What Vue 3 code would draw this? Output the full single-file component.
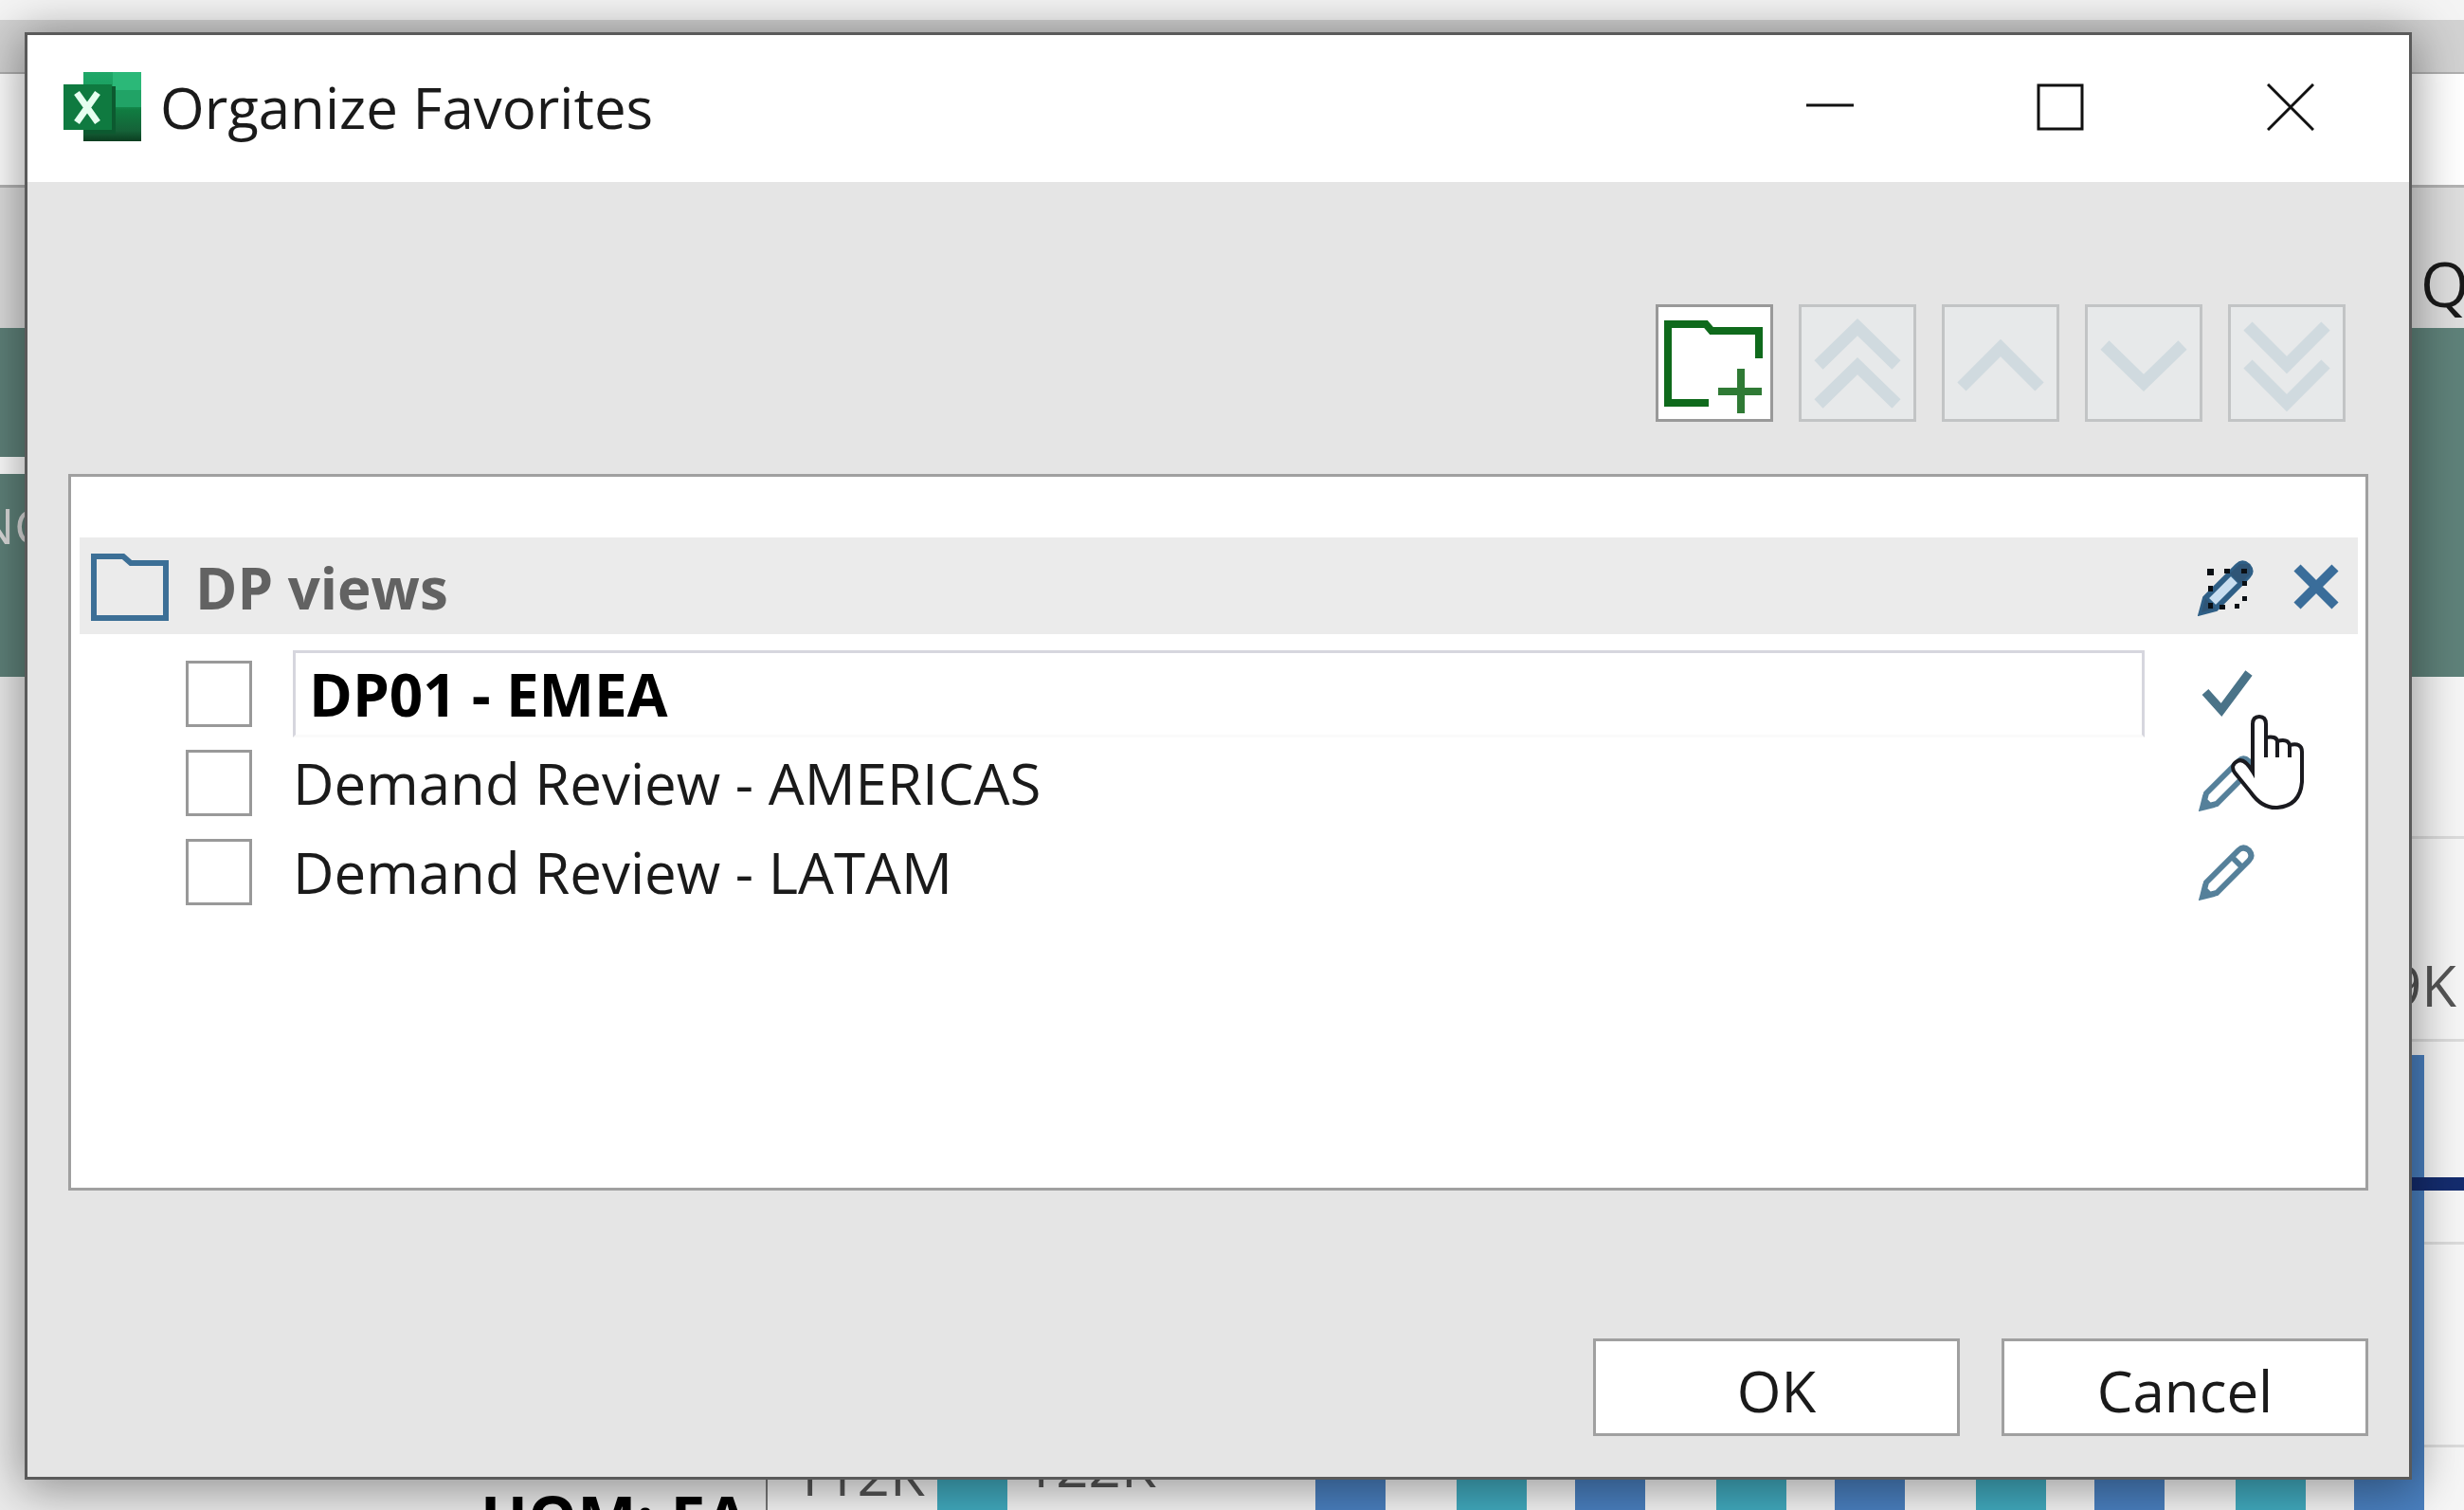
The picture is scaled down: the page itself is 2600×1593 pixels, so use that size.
<template>
  <div class="desktop">
    <div class="sheet" aria-hidden="true">
      <div class="strip ribbon"></div>
      <div class="strip tabs"></div>
      <div class="strip formula"></div>
      <div class="strip heading"><span class="quarter">Q</span></div>
      <div class="band band-top"></div>
      <div class="band band-bottom"><span class="band-text">NG</span></div>
      <div class="report">
        <div class="side"><span class="uom">UOM: EA</span></div>
        <div class="chart">
          <div class="groups">
            <div v-for="(g, i) in groups" :key="i" class="group">
              <div class="bar teal" :style="{ height: `${g[0]}px` }"></div>
              <div class="bar blue" :style="{ height: `${g[1]}px` }"></div>
            </div>
          </div>
          <div class="target"></div>
          <span class="value value-a">112K</span>
          <span class="value value-b">122K</span>
          <span class="value value-c">109K</span>
        </div>
      </div>
    </div>

    <section class="dialog" role="dialog" aria-labelledby="dialog-title">
      <header class="titlebar">
        <svg class="app-icon" viewBox="0 0 82 73">
          <defs>
            <linearGradient id="page" x1="0" y1="0" x2="0" y2="1">
              <stop offset="0" stop-color="#1fa768" />
              <stop offset="0.45" stop-color="#189a5a" />
              <stop offset="0.55" stop-color="#107c41" />
              <stop offset="0.85" stop-color="#156238" />
              <stop offset="1" stop-color="#0b3d20" />
            </linearGradient>
          </defs>
          <rect x="21" y="0" width="61" height="73" fill="url(#page)" />
          <rect x="52" y="0" width="30" height="19" fill="#2bb878" />
          <rect x="52" y="19" width="30" height="18" fill="#21a366" />
          <rect x="21" y="15" width="34" height="50" fill="#0c5a30" />
          <rect x="0" y="13" width="51" height="48" fill="#0f7a40" />
          <path d="M14 22L36 53M36 22L14 53" stroke="#e6fff0" stroke-width="7" fill="none" />
        </svg>
        <h1 id="dialog-title">Organize Favorites</h1>
        <div class="window-buttons">
          <button type="button" aria-label="Minimize">
            <svg viewBox="0 0 50 50"><path d="M0 23H50" /></svg>
          </button>
          <button type="button" aria-label="Maximize">
            <svg viewBox="0 0 50 50"><path d="M2 2H48V48H2Z" /></svg>
          </button>
          <button type="button" aria-label="Close">
            <svg viewBox="0 0 50 50"><path d="M1 1L49 49M49 1L1 49" /></svg>
          </button>
        </div>
      </header>

      <div class="toolbar">
        <button type="button" class="tool add" aria-label="New folder">
          <svg viewBox="0 0 118 118">
            <path d="M53 101H10V18H50L56 25H106V54" stroke="#0f6a1c" stroke-width="8" />
            <path d="M87 65V112M63 89H109" stroke="#2f7a35" stroke-width="8" />
          </svg>
        </button>
        <button v-for="m in moves" :key="m.name" type="button" class="tool" disabled :aria-label="m.name">
          <svg viewBox="0 0 118 118"><path :d="m.path" stroke="#d0dadf" stroke-width="13" /></svg>
        </button>
      </div>

      <div class="list">
        <div class="folder">
          <svg class="folder-icon" viewBox="0 0 84 74">
            <path d="M4 4H35L43 11H80V69H4Z" fill="none" stroke="#3c6f96" stroke-width="6" />
          </svg>
          <h2>DP views</h2>
          <button type="button" class="action" aria-label="Rename folder">
            <svg viewBox="0 0 60 60">
              <path d="M4 56L8 41L42 7Q47 2 53 7Q58 13 53 18L19 52ZM35 14L46 25M8 41L19 52" fill="#c9def0" stroke="#2f5f86" stroke-width="6" />
              <path d="M4 56L8 41L19 52ZM34 15L44 5H55V16L45 26Z" fill="#2f5577" />
              <path d="M10 10h7v7h-7zM28 10h6v5h-6zM11 28h5v6h-5zM11 46h5v6h-5zM23 48h6v5h-6zM39 47h5v5h-5zM47 23h5v5h-5zM47 39h5v5h-5zM46 10h6v5h-6z" fill="#0a0f14" />
            </svg>
          </button>
          <button type="button" class="action" aria-label="Delete folder">
            <svg viewBox="0 0 60 60"><path d="M10 9L50 49M50 9L10 49" stroke="#3a6d9a" stroke-width="10" fill="none" /></svg>
          </button>
        </div>

        <ul>
          <li v-for="item in items" :key="item.id" class="item">
            <input :id="item.id" v-model="item.checked" type="checkbox" :aria-label="item.label" />
            <input v-if="item.editing" v-model="item.label" class="name-box" type="text" aria-label="Favorite name" />
            <label v-else :for="item.id">{{ item.label }}</label>
            <button type="button" class="action" :aria-label="item.editing ? 'Apply' : 'Rename'">
              <svg v-if="item.editing" viewBox="0 0 60 60">
                <path d="M7 28L24 47L53 8" fill="none" stroke="#4a7388" stroke-width="9" />
              </svg>
              <svg v-else viewBox="0 0 60 60">
                <path d="M4 56L8 41L42 7Q47 2 53 7Q58 13 53 18L19 52ZM35 14L46 25M4 56L12 54L6 48Z" fill="none" stroke="#55809a" stroke-width="6" />
              </svg>
            </button>
            <svg v-if="item.editing" class="pointer" viewBox="0 0 78 102">
              <path
                d="M24 61V11Q24 3 31 3Q38 3 38 11V25Q49 23 50 29Q61 26 63 33Q76 30 76 40V72Q74 97 50 99Q34 100 22 83L5 62Q0 54 8 50Q15 46 24 61Z"
                fill="#fff"
              />
              <path d="M38 24V46M50 28V46M63 32V46" fill="none" />
            </svg>
          </li>
        </ul>
      </div>

      <footer class="footer">
        <button type="button">OK</button>
        <button type="button">Cancel</button>
      </footer>
    </section>
  </div>
</template>

<script setup>
import { ref } from 'vue';

const items = ref([
  { id: 'fav-1', label: 'DP01 - EMEA', checked: false, editing: true },
  { id: 'fav-2', label: 'Demand Review - AMERICAS', checked: false, editing: false },
  { id: 'fav-3', label: 'Demand Review - LATAM', checked: false, editing: false }
]);

const moves = [
  { name: 'Move to top', path: 'M18 61L59 21L100 61M18 102L59 62L100 102' },
  { name: 'Move up', path: 'M18 84L59 43L100 84' },
  { name: 'Move down', path: 'M18 40L59 80L100 40' },
  { name: 'Move to bottom', path: 'M18 20L59 61L100 20M18 60L59 101L100 60' }
];

// bar heights per period: [teal, blue]
const groups = [
  [60, 0],
  [0, 60],
  [60, 60],
  [60, 60],
  [60, 60],
  [60, 482]
];
</script>

<style>
body {
  margin: 0;
}
</style>

<style scoped>
.desktop {
  display: grid;
  overflow: hidden;
  font-family: 'Open Sans', 'Noto Sans', sans-serif;
  font-size: 60px;
  font-weight: 400;
  line-height: 80px;
  color: #1a1a1a;
}
.desktop * {
  box-sizing: border-box;
}
.sheet,
.dialog {
  grid-area: 1 / 1;
  min-width: 0;
}

/* workbook behind the dialog */
.sheet {
  display: flex;
  flex-direction: column;
  overflow: hidden;
}
.strip,
.band {
  flex: none;
}
.ribbon {
  height: 21px;
  background: #f4f4f4;
}
.tabs {
  height: 57px;
  background: #d2d2d2;
  border-bottom: 2px solid #b0b0b0;
}
.formula {
  height: 120px;
  background: #fff;
  border-bottom: 3px solid #b4b4b4;
}
.heading {
  display: flex;
  justify-content: flex-end;
  align-items: flex-end;
  height: 148px;
  padding-bottom: 8px;
  background: #dedede;
}
.quarter {
  width: 46px;
  font-size: 66px;
}
.band {
  background: #5f827a;
}
.band-top {
  height: 136px;
}
.band-bottom {
  height: 232px;
  border-top: 18px solid #5f827a;
  border-image: linear-gradient(to right, #fff 50%, #5f827a 50%) 18;
  overflow: hidden;
}
.band-text {
  display: block;
  padding-top: 14px;
  margin-left: -24px;
  font-size: 52px;
  color: #dcdcdc;
}
.report {
  flex: 1;
  display: flex;
  min-height: 0;
}
.side {
  display: flex;
  justify-content: flex-end;
  align-items: flex-end;
  width: 810px;
  padding-right: 18px;
  background: #ececec;
  border-right: 2px solid #777;
}
.uom {
  height: 34px;
  font-size: 66px;
  font-weight: 700;
  color: #000;
}
.chart {
  position: relative;
  flex: 1;
  background: repeating-linear-gradient(#f6f6f6 0 168px, #dcdcdc 168px 171px, #f6f6f6 171px 214px);
}
.groups {
  display: flex;
  justify-content: flex-end;
  align-items: flex-end;
  gap: 75px;
  height: 100%;
  padding-right: 42px;
}
.group {
  display: flex;
  align-items: flex-end;
  gap: 51px;
}
.bar {
  width: 74px;
}
.teal {
  background: #41abbf;
}
.blue {
  background: #4a80c0;
}
.target {
  position: absolute;
  right: 0;
  bottom: 339px;
  width: 60px;
  height: 14px;
  background: #142c6e;
}
.value {
  position: absolute;
  color: #555;
}
.value-a {
  left: 26px;
  bottom: 0;
}
.value-b {
  left: 270px;
  bottom: 9px;
}
.value-c {
  right: 8px;
  bottom: 516px;
}

/* dialog */
.dialog {
  position: relative;
  margin: 34px 55px 34px 26px;
  padding-bottom: 43px;
  background: #e5e5e5;
  border: 3px solid #5a5a5a;
  box-shadow: 0 6px 48px 4px rgba(0, 0, 0, 0.4);
}
h1,
h2 {
  margin: 0;
  font-size: 60px;
  font-weight: inherit;
}
button {
  display: flex;
  align-items: center;
  justify-content: center;
  padding: 0;
  border: 0;
  background: none;
  font: inherit;
  color: inherit;
}
svg {
  display: block;
  flex: none;
}
.titlebar {
  display: flex;
  align-items: center;
  height: 155px;
  padding: 0 4px 4px 38px;
  background: #fff;
}
.app-icon {
  width: 82px;
  height: 73px;
  margin-right: 20px;
}
.window-buttons {
  display: flex;
  margin-left: auto;
}
.window-buttons button {
  width: 243px;
  height: 150px;
}
.window-buttons svg {
  width: 50px;
  height: 50px;
  fill: none;
  stroke: #111;
  stroke-width: 3;
}
.toolbar {
  display: flex;
  justify-content: flex-end;
  gap: 27px;
  padding: 129px 67px 55px;
}
.tool {
  width: 124px;
  height: 124px;
  border: 3px solid #c2c4c5;
  background: #e7e9ea;
}
.tool svg {
  width: 118px;
  height: 118px;
  fill: none;
}
.tool.add {
  border-color: #999;
  background: #fff;
}
.list {
  min-height: 756px;
  margin: 0 43px;
  padding: 64px 8px 0 9px;
  background: #fff;
  border: 3px solid #a0a0a0;
}
.folder {
  display: flex;
  align-items: center;
  height: 102px;
  padding: 4px 14px 0 11px;
  background: #ebebeb;
}
.folder-icon {
  width: 84px;
  height: 74px;
  margin-right: 27px;
}
.folder h2 {
  flex: 1;
  font-weight: 700;
  color: #626262;
}
.action {
  width: 60px;
  height: 60px;
}
.action + .action {
  margin-left: 35px;
}
.action svg {
  width: 60px;
  height: 60px;
}
ul {
  margin: 0;
  padding: 16px 108px 0 112px;
  list-style: none;
}
.item {
  position: relative;
  display: flex;
  align-items: center;
  height: 94px;
}
.item input[type='checkbox'] {
  appearance: none;
  flex: none;
  width: 70px;
  height: 70px;
  margin: 0 43px 0 0;
  background: #fff;
  border: 3px solid #999;
}
.item label {
  flex: 1;
}
.name-box {
  flex: 1;
  min-width: 0;
  height: 92px;
  margin-right: 57px;
  padding: 0 14px;
  border: 3px solid #d6d6de;
  border-bottom-color: #fafafa;
  background: #fff;
  font: inherit;
  font-size: 62px;
  font-weight: 700;
  color: #000;
}
.pointer {
  position: absolute;
  top: 68px;
  right: -51px;
  z-index: 1;
  width: 78px;
  height: 102px;
  stroke: #1a1a1f;
  stroke-width: 4;
}
.footer {
  display: flex;
  justify-content: flex-end;
  gap: 44px;
  margin: 156px 43px 0;
}
.footer button {
  width: 387px;
  height: 103px;
  padding-top: 6px;
  border: 3px solid #a0a0a0;
  background: #fff;
}
</style>
